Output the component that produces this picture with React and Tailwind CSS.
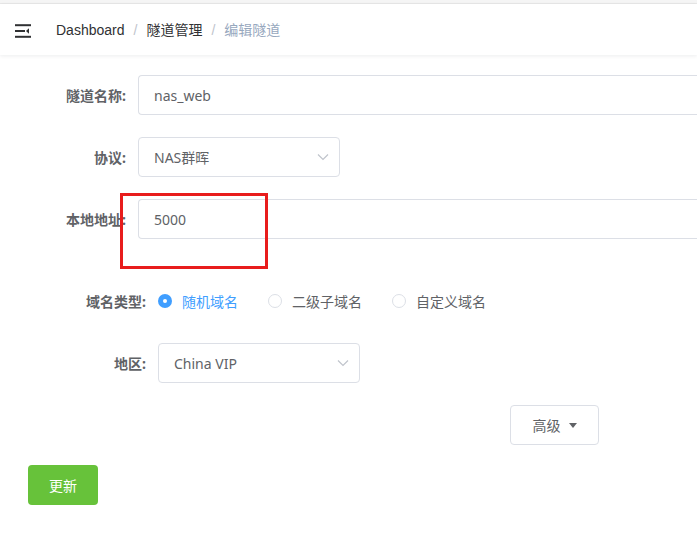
import React from "react";

const font = { fontFamily: '"Noto Sans", "Noto Sans CJK SC", sans-serif' };

function Chevron() {
  return (
    <svg width="12" height="8" viewBox="0 0 12 8" className="text-[#c0c4cc]">
      <path d="M1 1.5 L6 6.5 L11 1.5" fill="none" stroke="currentColor" strokeWidth="1.2" />
    </svg>
  );
}

function Radio({ checked, label }) {
  return (
    <div className="flex items-center mr-[30px]">
      {checked ? (
        <span className="w-[14px] h-[14px] rounded-full bg-[#409eff] flex items-center justify-center">
          <span className="w-[4px] h-[4px] rounded-full bg-white" />
        </span>
      ) : (
        <span className="w-[14px] h-[14px] rounded-full border border-[#dcdfe6] bg-white" />
      )}
      <span className={`ml-[10px] text-[14px] ${checked ? "text-[#409eff]" : "text-[#606266]"}`}>{label}</span>
    </div>
  );
}

export default function App() {
  return (
    <div className="w-[697px] h-[539px] bg-white overflow-hidden relative" style={{ fontFamily: '"Liberation Sans", "Noto Sans CJK SC", sans-serif' }}>
      <div className="h-[4px] bg-[#f5f5f5] border-b border-[#e8e8e8]" />
      <div className="h-[51px] flex items-center pt-[2px] bg-white shadow-[0_1px_4px_rgba(0,21,41,0.08)] relative">
        <div className="w-[56px] flex items-center pl-[14px]">
          <svg width="18" height="14" viewBox="0 0 18 14">
            <rect x="1" y="0.2" width="16" height="2" fill="#303133" />
            <rect x="1" y="6" width="10" height="2" fill="#303133" />
            <path d="M15 4.2 L12 7 L15 9.8 Z" fill="#303133" />
            <rect x="1" y="11.8" width="16" height="2" fill="#303133" />
          </svg>
        </div>
        <div className="flex items-center text-[14px]">
          <span className="text-[#303133]">Dashboard</span>
          <span className="text-[#c0c4cc] mx-[9px]">/</span>
          <span className="text-[#303133]">隧道管理</span>
          <span className="text-[#c0c4cc] mx-[9px]">/</span>
          <span className="text-[#97a8be]">编辑隧道</span>
        </div>
      </div>

      <div className="pt-[20px] text-[14px]" style={font}>
        <div className="flex items-center h-[40px]">
          <label className="w-[138px] pr-[12px] text-right font-bold text-[#606266]">隧道名称:</label>
          <div className="flex-1 h-[40px] border border-[#dcdfe6] rounded-[4px] border-r-0 rounded-r-none flex items-center pl-[15px] text-[#606266]">nas_web</div>
        </div>
        <div className="flex items-center h-[40px] mt-[22px]">
          <label className="w-[138px] pr-[12px] text-right font-bold text-[#606266]">协议:</label>
          <div className="w-[202px] h-[40px] border border-[#dcdfe6] rounded-[4px] flex items-center justify-between pl-[15px] pr-[10px] text-[#606266]">
            <span>NAS群晖</span>
            <Chevron />
          </div>
        </div>
        <div className="flex items-center h-[40px] mt-[22px]">
          <label className="w-[138px] pr-[12px] text-right font-bold text-[#606266]">本地地址:</label>
          <div className="flex-1 h-[40px] border border-[#dcdfe6] rounded-[4px] border-r-0 rounded-r-none flex items-center pl-[15px] text-[#606266]">5000</div>
        </div>

        <div className="flex items-center h-[40px] mt-[42px]">
          <label className="w-[158px] pr-[12px] text-right font-bold text-[#606266]">域名类型:</label>
          <Radio checked label="随机域名" />
          <Radio label="二级子域名" />
          <Radio label="自定义域名" />
        </div>
        <div className="flex items-center h-[40px] mt-[22px]">
          <label className="w-[158px] pr-[12px] text-right font-bold text-[#606266]">地区:</label>
          <div className="w-[202px] h-[40px] border border-[#dcdfe6] rounded-[4px] flex items-center justify-between pl-[15px] pr-[10px] text-[#606266]">
            <span>China VIP</span>
            <Chevron />
          </div>
        </div>

        <div className="flex mt-[22px] pl-[510px]">
          <button className="w-[89px] h-[40px] border border-[#dcdfe6] rounded-[4px] bg-white text-[#606266] flex items-center justify-center">
            <span>高级</span>
            <svg width="8" height="5" viewBox="0 0 8 5" className="ml-[8px]">
              <path d="M0 0 L8 0 L4 5 Z" fill="#606266" />
            </svg>
          </button>
        </div>

        <div className="flex mt-[20px] pl-[28px]">
          <button className="w-[70px] h-[40px] rounded-[4px] bg-[#67c23a] text-white flex items-center justify-center">更新</button>
        </div>
      </div>

      <div className="absolute left-[120px] top-[193px] w-[148px] h-[76px] border-[3px] border-[#e81c1c]" />
    </div>
  );
}
